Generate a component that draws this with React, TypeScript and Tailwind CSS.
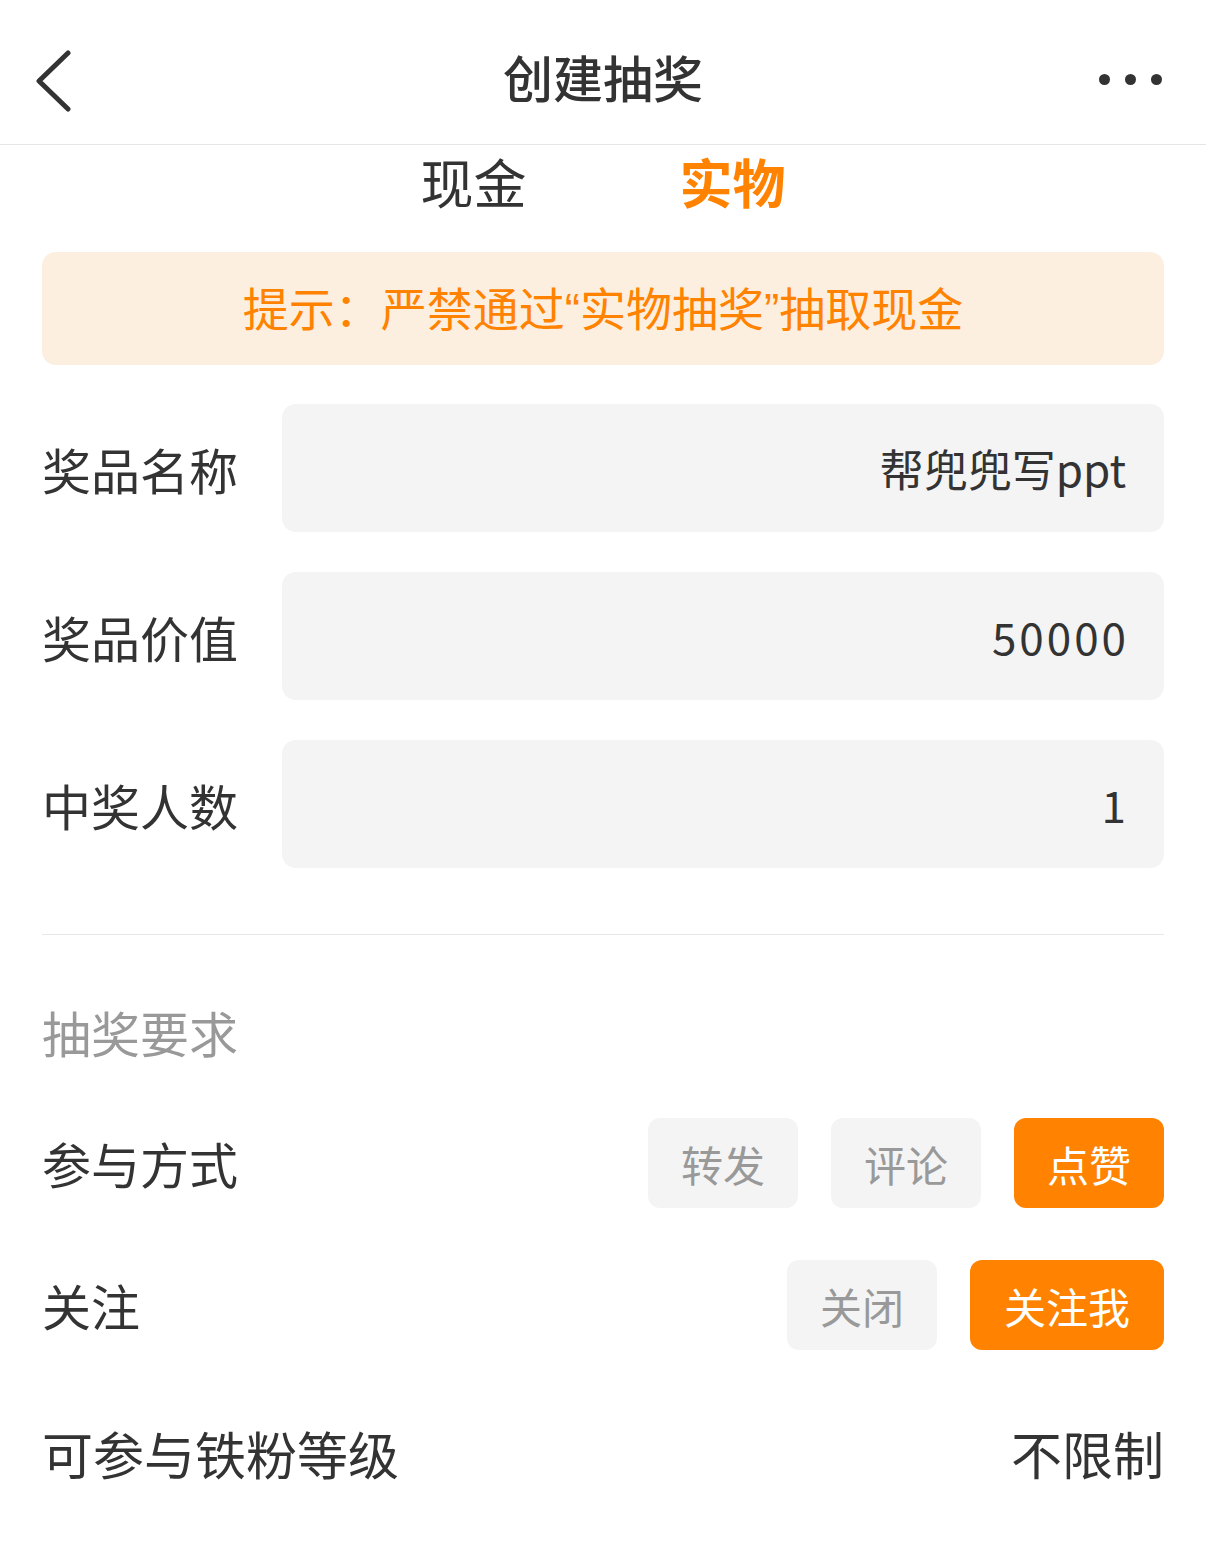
import React from 'react';

const font = { fontFamily: '"Noto Sans CJK SC", "Noto Sans", sans-serif' };

function Field({ label, value, num }: { label: string; value: string; num?: boolean }) {
  return (
    <div className="flex items-center">
      <div className="w-[240px] shrink-0 text-[49px] leading-none text-[#333]">{label}</div>
      <div
        className={`flex h-[128px] flex-1 items-center justify-end rounded-[14px] bg-[#f4f4f4] text-[44px] text-[#333] ${
          num ? 'pr-[35px] tracking-[3px]' : 'pr-[38px]'
        }`}
      >
        {value}
      </div>
    </div>
  );
}

function Chip({ text, active, w }: { text: string; active?: boolean; w: string }) {
  return (
    <div
      className={`flex h-[90px] items-center justify-center rounded-[12px] text-[42px] ${w} ${
        active ? 'bg-[#ff8200] text-white' : 'bg-[#f4f4f4] text-[#999]'
      }`}
    >
      {text}
    </div>
  );
}

const q = { fontFamily: '"Liberation Sans", sans-serif' };

export default function App() {
  return (
    <div className="min-h-[1550px] w-[1206px] bg-white" style={font}>
      {/* header */}
      <div className="relative flex h-[145px] items-center justify-center border-b border-[#e6e6e6] pt-[8px]">
        <svg className="absolute left-[32px] top-[50px]" width="42" height="62" viewBox="0 0 42 62">
          <polyline points="36,3 7,31 36,59" fill="none" stroke="#333" strokeWidth="5" strokeLinecap="round" strokeLinejoin="round" />
        </svg>
        <h1 className="text-[50px] font-medium text-[#333]">创建抽奖</h1>
        <div className="absolute right-[44px] top-[74px] flex gap-[15px]">
          <span className="h-[11px] w-[11px] rounded-full bg-[#333]" />
          <span className="h-[11px] w-[11px] rounded-full bg-[#333]" />
          <span className="h-[11px] w-[11px] rounded-full bg-[#333]" />
        </div>
      </div>

      {/* tabs */}
      <div className="flex h-[72px] items-center justify-center gap-[153px] text-[53px] leading-none">
        <span className="text-[#333]">现金</span>
        <span className="font-bold text-[#ff8200]">实物</span>
      </div>

      <div className="px-[42px]">
        <div className="mt-[35px] flex h-[113px] items-center justify-center rounded-[14px] bg-[#fdefdf] text-[46px] text-[#ff8200]">
          <span>
            提示：严禁通过<span style={q}>“</span>实物抽奖<span style={q}>”</span>抽取现金
          </span>
        </div>

        <div className="mt-[39px] flex flex-col gap-[40px]">
          <Field label="奖品名称" value="帮兜兜写ppt" />
          <Field label="奖品价值" value="50000" num />
          <Field label="中奖人数" value="1" num />
        </div>

        <div className="mt-[66px] h-px bg-[#e8e8e8]" />

        <div className="mt-[67px] flex h-[60px] items-center text-[49px] text-[#999]">抽奖要求</div>

        <div className="mt-[56px] flex items-center justify-between">
          <span className="text-[49px] text-[#333]">参与方式</span>
          <div className="flex gap-[33px]">
            <Chip text="转发" w="w-[150px]" />
            <Chip text="评论" w="w-[150px]" />
            <Chip text="点赞" w="w-[150px]" active />
          </div>
        </div>

        <div className="mt-[52px] flex items-center justify-between">
          <span className="text-[49px] text-[#333]">关注</span>
          <div className="flex gap-[33px]">
            <Chip text="关闭" w="w-[150px]" />
            <Chip text="关注我" w="w-[194px]" active />
          </div>
        </div>

        <div className="mt-[73px] flex h-[60px] items-center justify-between text-[51px] text-[#333]">
          <span>可参与铁粉等级</span>
          <span>不限制</span>
        </div>
      </div>
    </div>
  );
}
